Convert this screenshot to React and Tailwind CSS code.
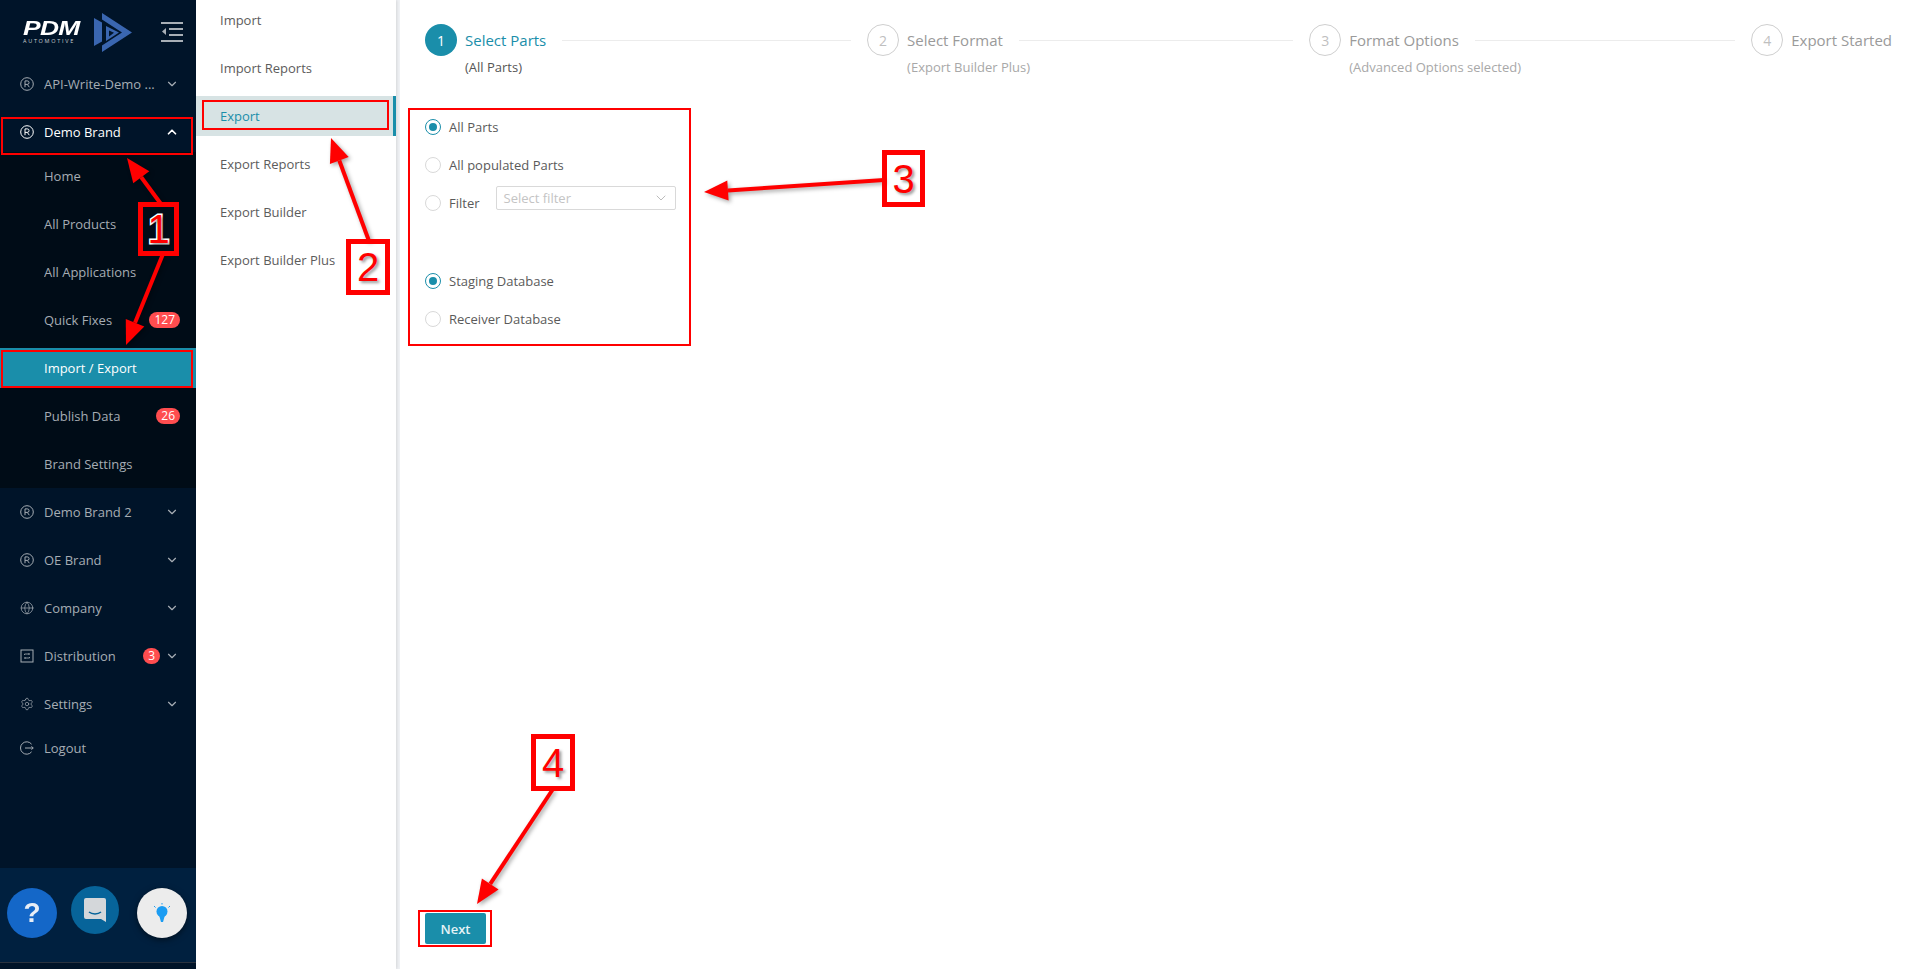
import { ChevronDown, ChevronUp, Globe, Settings } from 'lucide-react';

const Registered = () => (
  <svg width="14" height="14" viewBox="0 0 14 14" fill="none" stroke="currentColor" strokeWidth="1">
    <circle cx="7" cy="7" r="6.3" />
    <path d="M5 10.2V3.9h2.3a1.7 1.7 0 0 1 0 3.5H5M7.3 7.4l2 2.8" />
  </svg>
);

const DistIcon = () => (
  <svg width="14" height="14" viewBox="0 0 14 14" fill="none" stroke="currentColor" strokeWidth="1">
    <rect x="1" y="1" width="12" height="12" />
    <path d="M4.5 6V5h5M8.5 4l1 1-1 1M9.5 8v1h-5M5.5 10l-1-1 1-1" strokeWidth="0.8" />
  </svg>
);

const LogoutIcon = () => (
  <svg width="14" height="14" viewBox="0 0 14 14" fill="none" stroke="currentColor" strokeWidth="1">
    <path d="M11.6 3.2A6.2 6.2 0 1 0 11.6 10.800" />
    <path d="M5 7h8.200M11.500 5.300L13.200 7l-1.700 1.700" />
  </svg>
);

const MenuRow = ({ icon, label, open, active, chevron, badge, strong }) => (
  <div className={`mb-2 flex h-10 items-center pl-5 pr-5 ${active ? 'bg-[#1a8eaa] text-white' : strong ? 'text-white' : 'text-[#a6adb4]'}`}>
    <span className="flex w-6 shrink-0 items-center">{icon}</span>
    <span className="flex-1 truncate pt-[2px]">{label}</span>
    {badge && (
      <span className={`flex h-4 items-center rounded-full bg-[#ff4d4f] px-[5px] text-[12px] leading-none text-white ${chevron ? 'mr-[5px]' : '-mr-1'}`}>
        {badge}
      </span>
    )}
    {chevron && (open ? <ChevronUp size={14} strokeWidth={3} className="-mr-[3px]" /> : <ChevronDown size={14} strokeWidth={2} className="-mr-[3px]" />)}
  </div>
);

const SubRow = (props) => (
  <MenuRow {...props} icon={null} />
);

function Logo() {
  return (
    <div className="flex h-[60px] shrink-0 items-center pl-[23px] pr-[13px] pt-1">
      <div className="flex w-[62px] flex-col items-start leading-none text-white">
        <span className="origin-left scale-x-[1.32] text-[20px] font-bold italic leading-[17px] tracking-[-0.5px] [font-family:'Liberation_Sans',sans-serif]">PDM</span>
        <span className="mt-[2px] whitespace-nowrap text-[5.5px] tracking-[1.7px] text-[#c8ced4]">AUTOMOTIVE</span>
      </div>
      <svg width="38" height="39" viewBox="0 0 38 39" className="ml-[9px]" fill="#3a66b0">
        <path d="M0 5L8 9.500V28.500L0 33Z" />
        <path d="M8 0L38 19.500L8 39V32.500L28 19.500L8 6.500Z" />
        <path fillRule="evenodd" d="M12 13L25 19.500L12 28ZM15 17.500V23.500L20 19.800Z" />
      </svg>
      <svg width="22" height="20" viewBox="0 0 22 20" className="ml-auto" fill="#a8afb6">
        <rect x="0" y="0" width="22" height="2" />
        <rect x="8" y="6" width="14" height="2" />
        <rect x="8" y="12" width="14" height="2" />
        <rect x="0" y="18" width="22" height="2" />
        <path d="M5 6 L1 9.500 L5 13 Z" />
      </svg>
    </div>
  );
}

function Sidebar() {
  return (
    <aside className="flex h-full w-[196px] shrink-0 flex-col bg-[#001429] text-[13px]">
      <Logo />
      <div className="pt-1">
        <MenuRow icon={<Registered />} label="API-Write-Demo ..." chevron />
        <MenuRow icon={<Registered />} label="Demo Brand" chevron open strong />
        <div className="-mt-2 flex flex-col bg-[#000c17] pt-1">
          <SubRow label="Home" />
          <SubRow label="All Products" />
          <SubRow label="All Applications" />
          <SubRow label="Quick Fixes" badge="127" />
          <SubRow label="Import / Export" active />
          <SubRow label="Publish Data" badge="26" />
          <div className="-mb-1"><SubRow label="Brand Settings" /></div>
        </div>
        <div className="pt-1">
          <MenuRow icon={<Registered />} label="Demo Brand 2" chevron />
          <MenuRow icon={<Registered />} label="OE Brand" chevron />
          <MenuRow icon={<Globe size={14} strokeWidth={1.2} />} label="Company" chevron />
          <MenuRow icon={<DistIcon />} label="Distribution" chevron badge="3" />
          <MenuRow icon={<Settings size={14} strokeWidth={1.2} />} label="Settings" chevron />
          <div className="-mt-1"><MenuRow icon={<LogoutIcon />} label="Logout" /></div>
        </div>
      </div>
      <div className="mt-auto flex h-[101px] items-start border-b-[6px] border-[#001429] bg-[#00203f]">
        <div className="relative h-[95px] w-full border-b border-[#2a3340]">
          <HelpButtons />
        </div>
      </div>
    </aside>
  );
}

function HelpButtons() {
  return (
    <div className="flex items-center pl-[7px] pt-5 blur-[0.6px]">
      <div className="flex h-[50px] w-[50px] items-center justify-center rounded-full bg-[#1467c8] text-[28px] font-bold text-[#e8eef6] [font-family:'Liberation_Sans',sans-serif]">?</div>
      <div className="ml-[14px] -mt-[6px] flex h-[48px] w-[48px] items-center justify-center rounded-full bg-[#07649a]">
        <svg width="24" height="26" viewBox="0 0 24 26">
          <path d="M3 1h18a2 2 0 0 1 2 2v22l-5-3H3a2 2 0 0 1-2-2V3a2 2 0 0 1 2-2z" fill="#d4d7da" />
          <path d="M6 15c3 2.500 9 2.500 12 0" fill="none" stroke="#07649a" strokeWidth="1.500" />
        </svg>
      </div>
      <div className="ml-[18px] flex h-[50px] w-[50px] items-center justify-center rounded-full bg-[#ececec] shadow-[0_2px_6px_rgba(0,0,0,0.5)]">
        <svg width="20" height="20" viewBox="0 0 20 20" fill="#1b9cf2">
          <circle cx="10" cy="8.500" r="5.500" />
          <path d="M7 12h6l-2 7H9z" />
          <path d="M10 0v1.500M2 3l1.500 1.500M18 3l-1.500 1.500" stroke="#1b9cf2" strokeWidth="1" />
        </svg>
      </div>
    </div>
  );
}

function SubNav() {
  const items = ['Import', 'Import Reports', 'Export', 'Export Reports', 'Export Builder', 'Export Builder Plus'];
  return (
    <nav className="relative w-[200px] shrink-0 bg-white text-[13px] text-[#5c5c5c] shadow-[1px_0_3px_rgba(0,0,0,0.12)]">
      {items.map((item) => (
        <div
          key={item}
          className={`mb-2 flex h-10 items-center pl-6 pt-[2px] ${item === 'Export' ? 'border-r-[3px] border-[#1a8eaa] bg-[#d7e3e4] text-[#1a8eaa]' : ''}`}
        >
          {item}
        </div>
      ))}
    </nav>
  );
}

const Step = ({ n, title, sub, active, last }) => (
  <div className={`flex ${last ? 'shrink-0' : 'flex-1'}`}>
    <div className={`flex h-8 w-8 shrink-0 items-center justify-center rounded-full text-[14px] ${active ? 'bg-[#1a8eaa] text-white' : 'border border-[#cfcfcf] text-[#bfbfbf]'}`}>
      {n}
    </div>
    <div className={`ml-2 flex ${last ? '' : 'flex-1'} flex-col`}>
      <div className="flex h-8 items-center">
        <span className={`text-[15px] ${active ? 'text-[#1a8eaa]' : 'text-[#9a9a9a]'}`}>{title}</span>
        {!last && <span className="ml-4 mr-4 h-px flex-1 bg-[#ececec]" />}
      </div>
      {sub && <span className={`text-[13px] leading-[22px] ${active ? 'text-[#555]' : 'text-[#a8a8a8]'}`}>{sub}</span>}
    </div>
  </div>
);

const Radio = ({ checked, label }) => (
  <div className="flex items-center">
    <span className={`flex h-4 w-4 items-center justify-center rounded-full border ${checked ? 'border-[#1a8eaa]' : 'border-[#d9d9d9]'}`}>
      {checked && <span className="h-2 w-2 rounded-full bg-[#1a8eaa]" />}
    </span>
    <span className="ml-2 pt-[2px] text-[13px] text-[#5a5a5a]">{label}</span>
  </div>
);

function Main() {
  return (
    <main className="flex min-w-0 flex-1 flex-col border-l-4 border-[#f0f2f5] bg-white pl-[25px] pr-6 pt-6 pb-[25px]">
      <div className="flex">
        <Step n="1" title="Select Parts" sub="(All Parts)" active />
        <Step n="2" title="Select Format" sub="(Export Builder Plus)" />
        <Step n="3" title="Format Options" sub="(Advanced Options selected)" />
        <Step n="4" title="Export Started" last />
      </div>
      <div className="mt-10 flex flex-col">
        <div className="flex h-[18px] items-center"><Radio checked label="All Parts" /></div>
        <div className="mt-5 flex h-[18px] items-center"><Radio label="All populated Parts" /></div>
        <div className="mt-5 flex h-[18px] items-center">
          <Radio label="Filter" />
          <div className="relative -top-[5px] ml-4 flex h-6 w-[180px] items-center justify-between rounded-[2px] border border-[#d9d9d9] pl-[7px] pr-[6px] text-[13px] text-[#c4c4c4]">
            <span className="pt-[2px]">Select filter</span>
            <ChevronDown size={16} strokeWidth={1} className="text-[#9a9a9a]" />
          </div>
        </div>
        <div className="mt-[60px] flex h-[18px] items-center"><Radio checked label="Staging Database" /></div>
        <div className="mt-5 flex h-[18px] items-center"><Radio label="Receiver Database" /></div>
      </div>
      <button className="mt-auto flex h-[31px] w-[61px] items-center justify-center rounded-[2px] bg-[#1a8eaa] pt-[2px] text-[13px] font-semibold text-[#e6f3f6]">
        Next
      </button>
    </main>
  );
}

// red call-out arrow, drawn from tail to tip
function Arrow({ x1, y1, x2, y2 }) {
  const len = Math.hypot(x2 - x1, y2 - y1);
  const ux = (x2 - x1) / len;
  const uy = (y2 - y1) / len;
  const bx = x2 - ux * 24;
  const by = y2 - uy * 24;
  const points = `${x2},${y2} ${bx - uy * 10},${by + ux * 10} ${bx + uy * 10},${by - ux * 10}`;
  return (
    <g>
      <line x1={x1} y1={y1} x2={bx} y2={by} stroke="#ff0000" strokeWidth="4" />
      <polygon points={points} fill="#ff0000" />
    </g>
  );
}

const Callout = ({ n, className }) => (
  <div className={`absolute flex items-center justify-center border-[5px] border-[#ff0000] text-[40px] font-normal leading-none text-[#ff0000] [font-family:'Liberation_Sans',sans-serif] [paint-order:stroke_fill] [-webkit-text-stroke:3px_#ffffff] [text-shadow:2px_2px_3px_rgba(0,0,0,0.4)] ${className}`}>
    {n}
  </div>
);

function Annotations() {
  return (
    <div className="pointer-events-none absolute inset-0">
      <svg width="1916" height="969" className="absolute inset-0 [filter:drop-shadow(2px_2px_2px_rgba(0,0,0,0.35))]">
        <Arrow x1={161} y1={204} x2={127} y2={158} />
        <Arrow x1={163} y1={254} x2={126} y2={345} />
        <Arrow x1={369} y1={241} x2={331} y2={138} />
        <Arrow x1={884} y1={180} x2={704} y2={192} />
        <Arrow x1={553} y1={789} x2={477} y2={904} />
      </svg>
      <div className="absolute left-[1px] top-[117px] h-[38px] w-[192px] border-2 border-[#ff0000]" />
      <div className="absolute left-[1px] top-[350px] h-[38px] w-[192px] border-2 border-[#ff0000]" />
      <div className="absolute left-[202px] top-[100px] h-[30px] w-[187px] border-2 border-[#ff0000]" />
      <div className="absolute left-[408px] top-[108px] h-[238px] w-[283px] border-2 border-[#ff0000]" />
      <div className="absolute left-[418px] top-[910px] h-[37px] w-[74px] border-2 border-[#ff0000]" />
      <Callout n="1" className="left-[138px] top-[202px] h-[54px] w-[41px]" />
      <Callout n="2" className="left-[346px] top-[239px] h-[56px] w-[44px]" />
      <Callout n="3" className="left-[882px] top-[150px] h-[57px] w-[43px]" />
      <Callout n="4" className="left-[531px] top-[734px] h-[57px] w-[44px]" />
    </div>
  );
}

export default function App() {
  return (
    <div className="relative flex h-[969px] w-[1916px] overflow-hidden bg-white [font-family:'Open_Sans',sans-serif]">
      <Sidebar />
      <SubNav />
      <Main />
      <Annotations />
    </div>
  );
}
